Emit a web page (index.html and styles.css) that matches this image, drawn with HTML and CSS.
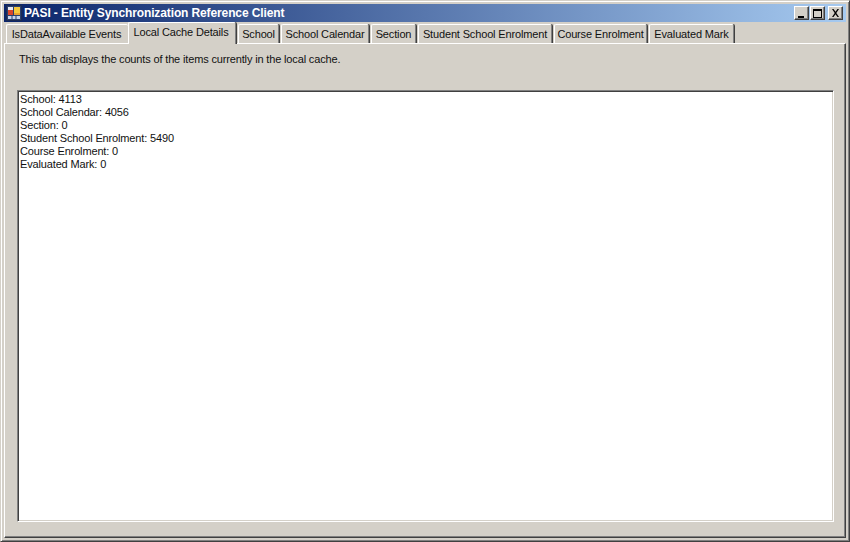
FILE: index.html
```html
<!DOCTYPE html>
<html lang="en">
<head>
<meta charset="utf-8">
<title>PASI - Entity Synchronization Reference Client</title>
<link rel="stylesheet" href="styles.css">
</head>
<body>
<div class="window">
  <header class="titlebar">
    <svg class="app-icon" width="16" height="16" viewBox="0 0 16 16">
      <rect x="0.5" y="0.5" width="15" height="15" fill="#2a3f6e" stroke="#1c2b52"/>
      <rect x="2" y="2" width="5" height="3" fill="#e8e8ee"/>
      <rect x="8" y="2" width="6" height="7" fill="#f6c83c"/>
      <rect x="2" y="5" width="5" height="5" fill="#d8452c"/>
      <rect x="8" y="8" width="6" height="2" fill="#e8a030"/>
      <rect x="2" y="11" width="12" height="3" fill="#c8d4ec"/>
      <path d="M6 11v3M10 11v3" stroke="#2a3f6e"/>
    </svg>
    <span class="title-text">PASI - Entity Synchronization Reference Client</span>
    <div class="caption-buttons">
      <button class="caption-btn" aria-label="Minimize"><svg width="10" height="9" viewBox="0 0 10 9"><rect x="1" y="7" width="6" height="2" fill="#000"/></svg></button>
      <button class="caption-btn" aria-label="Maximize"><svg width="10" height="9" viewBox="0 0 10 9"><path d="M0 0h9v9H0zM1 2v6h7V2z" fill="#000" fill-rule="evenodd"/></svg></button>
      <button class="caption-btn close" aria-label="Close"><svg width="10" height="9" viewBox="0 0 10 9"><path d="M1 0h1.500l2 2.800L6.500 0H8L5.300 4 8 8H6.500l-2-2.800L2.500 8H1l2.700-4z" fill="#000"/></svg></button>
    </div>
  </header>
  <nav class="tabs">
    <div class="tab tab-first">IsDataAvailable Events</div>
    <div class="tab tab-active">Local Cache Details</div>
    <div class="tab">School</div>
    <div class="tab">School Calendar</div>
    <div class="tab">Section</div>
    <div class="tab">Student School Enrolment</div>
    <div class="tab">Course Enrolment</div>
    <div class="tab">Evaluated Mark</div>
  </nav>
  <main class="panel">
    <p class="hint">This tab displays the counts of the items currently in the local cache.</p>
    <div class="cache-box">
      <div>School: 4113</div>
      <div>School Calendar: 4056</div>
      <div>Section: 0</div>
      <div>Student School Enrolment: 5490</div>
      <div>Course Enrolment: 0</div>
      <div>Evaluated Mark: 0</div>
    </div>
  </main>
</div>
</body>
</html>
```
FILE: styles.css
```css
* { box-sizing: border-box; }
html, body { margin: 0; height: 100%; overflow: hidden; }
body { background: #d4d0c8; font: 11px/13px "Liberation Sans", Arial, sans-serif; letter-spacing: -0.15px; color: #111; }
.window {
  width: 850px; height: 542px; display: flex; flex-direction: column;
  padding: 3px; background: #d4d0c8;
  border: 1px solid; border-color: #d4d0c8 #404040 #404040 #d4d0c8;
  box-shadow: inset 1px 1px 0 #fff, inset -1px -1px 0 #808080;
}
.titlebar {
  height: 18px; flex: none; display: flex; align-items: center; padding: 0 3px 0 2px;
  background: linear-gradient(90deg, #0a246a, #a6caf0); color: #fff;
  font-weight: bold; font-size: 12px; letter-spacing: -0.12px;
}
.app-icon { flex: none; margin-right: 2px; }
.title-text { flex: 1; white-space: nowrap; }
.caption-buttons { display: flex; flex: none; gap: 1px; }
.caption-btn {
  width: 15px; height: 14px; padding: 0; margin: 0; display: flex; align-items: center; justify-content: center;
  background: #d4d0c8; border: 1px solid; border-color: #fff #404040 #404040 #fff;
  box-shadow: inset -1px -1px 0 #808080;
}
.caption-btn.close { margin-left: 2px; }
.tabs {
  display: grid; height: 21px; flex: none; padding-left: 2px; align-items: end; position: relative; z-index: 1;
  grid-template-columns: 122px 109px 43px 90px 47px 136px 95px 87px;
  justify-content: start;
}
.tab {
  height: 19px; padding-top: 3px; white-space: nowrap; margin: 0 1px 0 1px; background: #d4d0c8; text-align: center;
  border-top: 1px solid #fff; border-left: 1px solid #fff; border-right: 1px solid #808080;
  border-radius: 2px 2px 0 0; box-shadow: 1px 0 0 #404040;
}
.tab-first { margin: 0; border-right: 0; box-shadow: none; padding-right: 2px; }
.tab-active { height: 22px; margin: 0 1px -1px 0; padding-right: 2px; position: relative; z-index: 2; }
.panel {
  flex: 1; display: flex; flex-direction: column;
  border: 1px solid; border-color: #fff #404040 #404040 #fff;
  box-shadow: inset -1px -1px 0 #808080;
  padding: 0 11px 15px 12px;
}
.hint { margin: 9px 0 0 2px; height: 37px; flex: none; }
.cache-box {
  flex: 1; background: #fff; padding: 2px;
  border: 1px solid; border-color: #808080 #fff #fff #808080;
  box-shadow: inset 1px 1px 0 #404040, inset -1px -1px 0 #d4d0c8;
}
```
